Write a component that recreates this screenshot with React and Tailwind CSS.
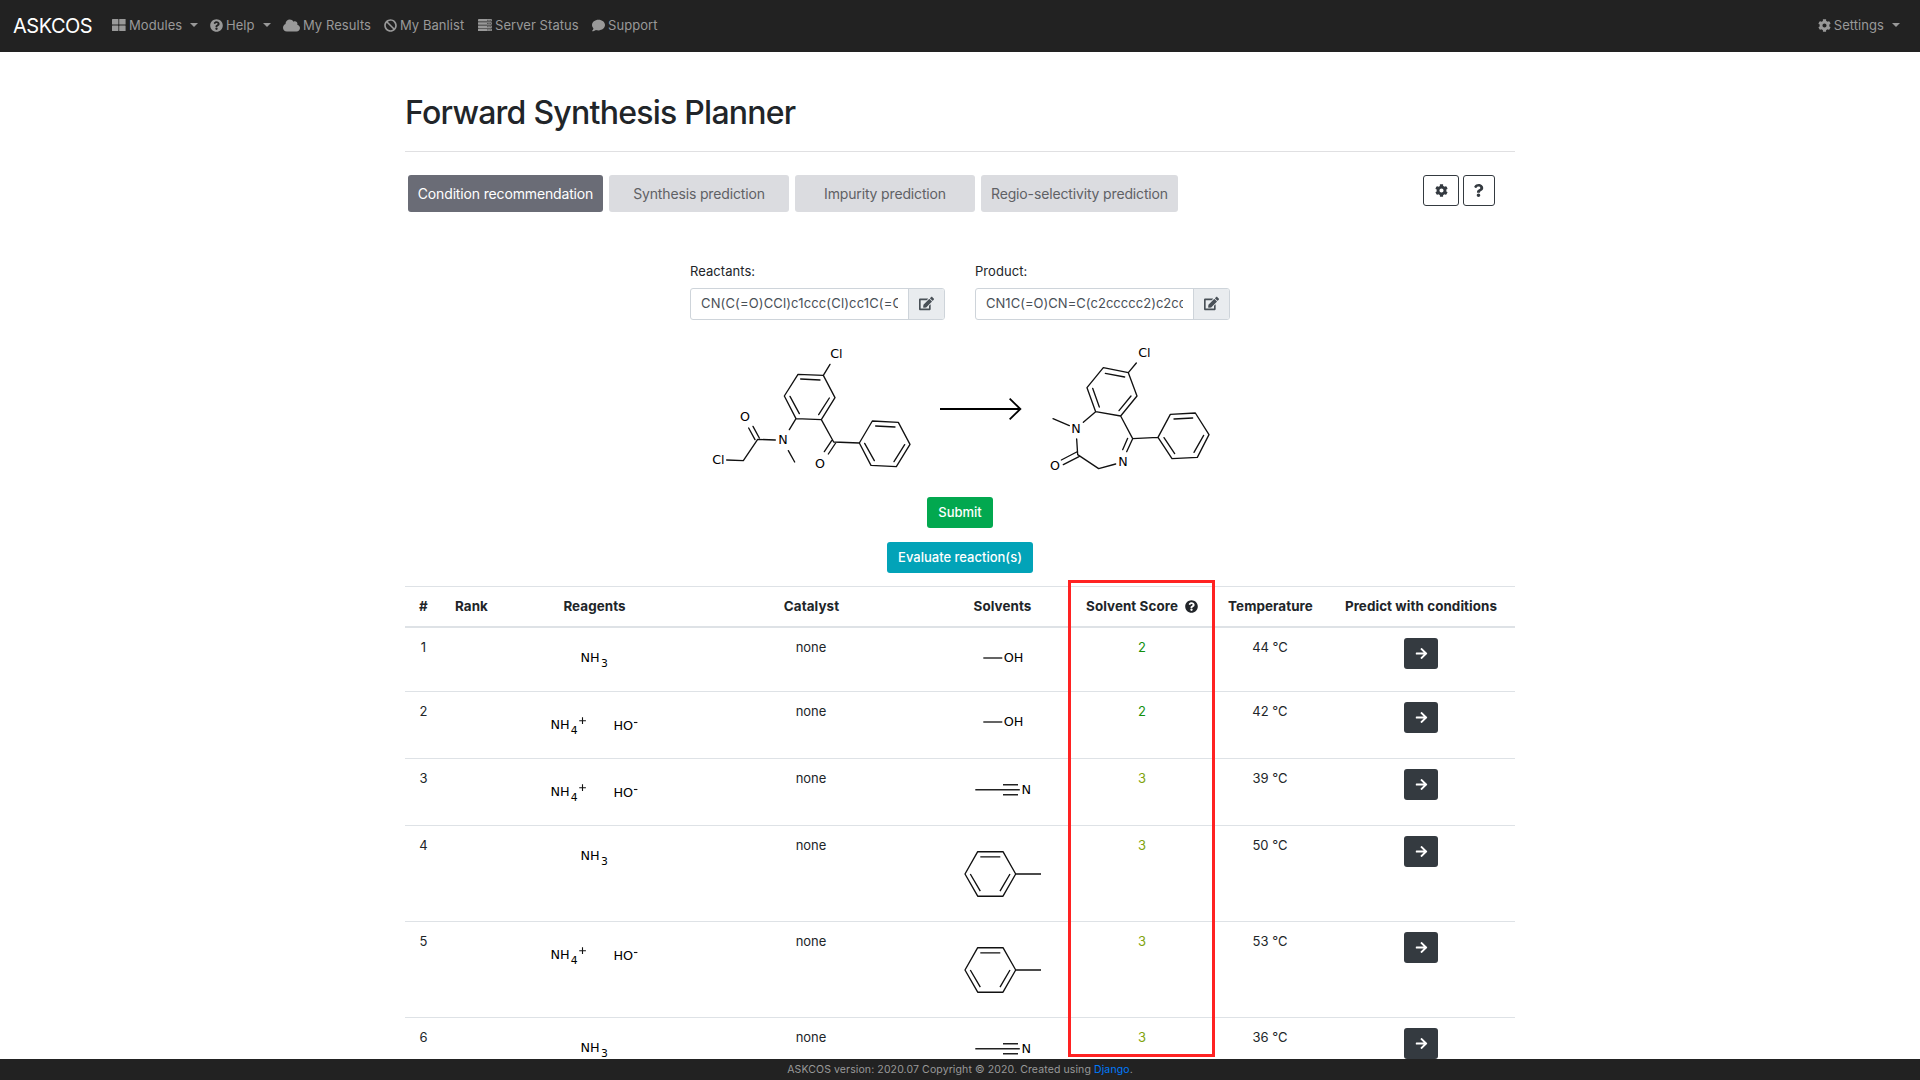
import React from "react";
import { FaQuestionCircle, FaCloud, FaBan, FaComment, FaCog, FaQuestion, FaEdit, FaArrowRight } from "react-icons/fa";

const MOL_FONT = '"DejaVu Sans", sans-serif';

function ModulesIcon() {
  return (
    <svg width="14" height="12" viewBox="0 0 14 12" fill="currentColor">
      <rect x="0" y="0" width="6.4" height="5.6" rx="0.5" />
      <rect x="7.2" y="0" width="6.4" height="5.6" rx="0.5" />
      <rect x="0" y="6.4" width="6.4" height="5.6" rx="0.5" />
      <rect x="7.2" y="6.4" width="6.4" height="5.6" rx="0.5" />
    </svg>
  );
}

function ServerIcon() {
  return (
    <svg width="14" height="12" viewBox="0 0 14 12">
      {[0, 3.2, 6.4, 9.6].map((y) => (
        <g key={y}>
          <rect x="0" y={y} width="13.8" height="2.5" rx="0.4" fill="currentColor" />
          <rect x="9.4" y={y + 0.8} width="1" height="1" fill="#222222" />
          <rect x="11.6" y={y + 0.8} width="1" height="1" fill="#222222" />
        </g>
      ))}
    </svg>
  );
}

function Caret() {
  return <span className="ml-[8px] h-0 w-0 border-x-4 border-t-4 border-x-transparent border-t-current" />;
}

function NavItem({ icon, label, caret, width }) {
  return (
    <a className={"flex items-center whitespace-nowrap " + width}>
      <span className="mr-[3px] flex shrink-0 items-center">{icon}</span>
      <span className="pt-[2px]">{label}</span>
      {caret && <Caret />}
    </a>
  );
}

function Lines({ d }) {
  return <path d={d} fill="none" stroke="#111" strokeWidth="4" strokeLinecap="round" strokeLinejoin="round" />;
}

function Atom({ x, y, children }) {
  return (
    <text x={x} y={y} fontSize="38" textAnchor="middle" fill="#000" fontFamily={MOL_FONT}>
      {children}
    </text>
  );
}

function ReactionDrawing() {
  return (
    <svg className="block" width="520" height="130" viewBox="700 342 520 130">
      <g transform="translate(680 250) scale(0.33333)">
        <Lines d="M354 373 L430 376 L465 443 L424 509 L348 506 L313 438 Z M362 387 L420 390 M448 444 L416 494 M358 491 L330 439 M430 376 L450 343 M348 506 L328 539 M286 570 L233 568 L190 632 L140 630 M238 564 L219 529 M225 569 L206 534 M325 602 L344 636 M424 509 L461 576 L538 579 M455 572 L433 605 M467 579 L445 612 M538 579 L577 513 L655 517 L690 583 L649 650 L573 646 Z M587 528 L645 531 M674 584 L642 635 M583 632 L554 580" />
        <Atom x={469} y={325}>Cl</Atom>
        <Atom x={195} y={513}>O</Atom>
        <Atom x={309} y={583}>N</Atom>
        <Atom x={115} y={643}>Cl</Atom>
        <Atom x={420} y={654}>O</Atom>
      </g>
      <g transform="translate(920 250) scale(0.33333)">
        <path d="M60 477 H300 M269 446 L301 477 L269 508" fill="none" stroke="#000" strokeWidth="5.5" />
        <Lines d="M550 353 L625 368 L651 438 L602 498 L527 485 L501 413 Z M556 370 L614 381 M633 438 L597 482 M538 471 L518 415 M625 368 L649 339 M527 485 L490 517 M448 527 L399 506 M470 567 L473 614 L536 656 L587 642 M470 606 L424 630 M477 620 L430 644 M602 498 L638 566 L714 562 M638 566 L620 605 M623 565 L608 599 M714 562 L751 493 L826 489 L867 554 L832 622 L756 626 Z M762 507 L818 504 M851 556 L822 607 M764 611 L732 563" />
        <Atom x={673} y={321}>Cl</Atom>
        <Atom x={468} y={549}>N</Atom>
        <Atom x={405} y={660}>O</Atom>
        <Atom x={609} y={647}>N</Atom>
      </g>
    </svg>
  );
}

function Reagents({ kind }) {
  return (
    <svg className="block" width="186" height="54" fontFamily={MOL_FONT} fill="#000" fontSize="12.8">
      {kind === "ammonia" ? (
        <>
          <text x="79.5" y="34.3">NH</text>
          <text x="100" y="38.7" fontSize="10.8">3</text>
        </>
      ) : (
        <>
          <text x="49.5" y="37">NH</text>
          <text x="69.8" y="41.7" fontSize="10.8">4</text>
          <path d="M78.2 28.7 H84.9 M81.5 25.3 V32" stroke="#111" strokeWidth="1.1" fill="none" />
          <text x="112.5" y="38">HO</text>
          <path d="M132.9 30.5 H136.4" stroke="#111" strokeWidth="1.1" fill="none" />
        </>
      )}
    </svg>
  );
}

function Solvent({ kind }) {
  if (kind === "methanol") {
    return (
      <svg className="block" width="134" height="54">
        <path d="M48.3 30 H67.3" stroke="#222" strokeWidth="1.4" />
        <text x="68.8" y="34.3" fontSize="12.8" fill="#000" fontFamily={MOL_FONT}>OH</text>
      </svg>
    );
  }
  if (kind === "acetonitrile") {
    return (
      <svg className="block" width="134" height="54">
        <path d="M40.3 30.8 H84.8 M68 25.8 H83 M68 35.8 H83" stroke="#222" strokeWidth="1.4" />
        <text x="86.6" y="35" fontSize="12.8" fill="#000" fontFamily={MOL_FONT}>N</text>
      </svg>
    );
  }
  return (
    <svg className="block" width="134" height="86">
      <path
        d="M30 48 L42.7 25.7 H68 L80.7 48 L68 70.2 H42.7 Z M80.7 48 H106 M45.3 30.8 H65.3 M35.3 48 L45.3 65.2 M75 48 L65 65.2"
        fill="none"
        stroke="#111"
        strokeWidth="1.35"
        strokeLinejoin="round"
      />
    </svg>
  );
}

const GRID = "grid grid-cols-[36px_60px_186px_248px_134px_146px_111px_189px]";

const rows = [
  { n: 1, reagents: "ammonia", solvent: "methanol", score: 2, temp: 44, height: "h-[64px]" },
  { n: 2, reagents: "ammonium", solvent: "methanol", score: 2, temp: 42, height: "h-[67px]" },
  { n: 3, reagents: "ammonium", solvent: "acetonitrile", score: 3, temp: 39, height: "h-[67px]" },
  { n: 4, reagents: "ammonia", solvent: "toluene", score: 3, temp: 50, height: "h-[96px]" },
  { n: 5, reagents: "ammonium", solvent: "toluene", score: 3, temp: 53, height: "h-[96px]" },
  { n: 6, reagents: "ammonia", solvent: "acetonitrile", score: 3, temp: 36, height: "h-[62px]" },
];

function SmilesField({ label, value, tracking }) {
  return (
    <div className="w-[255px]">
      <label className="block h-[27px] leading-[21px] tracking-[0.05px]">{label}</label>
      <div className="flex h-8 overflow-hidden rounded-[3px] border border-[#ced4da]">
        <div className={"flex flex-1 items-center overflow-hidden px-[10px] text-[#495057] " + tracking}>
          <span className="w-full overflow-hidden whitespace-nowrap">{value}</span>
        </div>
        <div className="flex w-[36px] items-center justify-center border-l border-[#ced4da] bg-[#e9ecef] pb-[2px] text-[#495057]">
          <FaEdit size={15} />
        </div>
      </div>
    </div>
  );
}

function Tab({ active, width, children }) {
  return (
    <div
      className={
        "flex h-[37px] items-center justify-center rounded-[3px] text-[14px] tracking-[-0.15px] whitespace-nowrap " +
        (active ? "bg-[#6a6c76] text-white " : "bg-[#dbdce0] text-[#5f6165] ") +
        width
      }
    >
      {children}
    </div>
  );
}

export default function App() {
  return (
    <div className="relative h-[1080px] w-[1920px] overflow-hidden bg-white font-['Inter','Liberation_Sans',sans-serif] text-[13px] text-[#212529]">
      <nav className="flex h-[52px] items-center bg-[#222222] pb-[2px] pl-[13px] tracking-[0.06px] text-[#999999]">
        <span className="w-[99px] pt-[2px] text-[20px] tracking-[-0.5px] text-white">ASKCOS</span>
        <NavItem width="w-[98px]" icon={<ModulesIcon />} label="Modules" caret />
        <NavItem width="w-[73px]" icon={<FaQuestionCircle size={13} />} label="Help" caret />
        <NavItem width="w-[101px]" icon={<FaCloud size={17} />} label="My Results" />
        <NavItem width="w-[94px]" icon={<FaBan size={13} />} label="My Banlist" />
        <NavItem width="w-[114px]" icon={<ServerIcon />} label="Server Status" />
        <NavItem width="w-[90px]" icon={<FaComment size={13} />} label="Support" />
        <div className="ml-auto mr-[20px]">
          <NavItem width="w-auto" icon={<FaCog size={13} />} label="Settings" caret />
        </div>
      </nav>

      <main className="mx-auto w-[1110px]">
        <div className="h-[100px] border-b border-[#e0e0e2] pt-[41px]">
          <h1 className="text-[32px] leading-[40px] font-medium tracking-[-0.75px]">Forward Synthesis Planner</h1>
        </div>

        <div className="mt-[23px] flex items-start pr-[20px] pl-[3px]">
          <div className="flex gap-[6px]">
            <Tab active width="w-[195px]">Condition recommendation</Tab>
            <Tab width="w-[180px]">Synthesis prediction</Tab>
            <Tab width="w-[180px]">Impurity prediction</Tab>
            <Tab width="w-[197px]">Regio-selectivity prediction</Tab>
          </div>
          <div className="ml-auto flex gap-1 text-[#343a40]">
            <button className="flex h-[31px] w-[36px] items-center justify-center rounded-[3px] border border-[#343a40]">
              <FaCog size={13} />
            </button>
            <button className="flex h-[31px] w-[32px] items-center justify-center rounded-[3px] border border-[#343a40] pr-[1px] pb-[1px]">
              <FaQuestion size={13} />
            </button>
          </div>
        </div>

        <div className="mt-[49px] flex justify-center gap-[30px]">
          <SmilesField label="Reactants:" value="CN(C(=O)CCl)c1ccc(Cl)cc1C(=O)c1ccccc1" tracking="tracking-[0.14px]" />
          <SmilesField label="Product:" value="CN1C(=O)CN=C(c2ccccc2)c2cc(Cl)ccc21" tracking="tracking-[0.03px]" />
        </div>

        <div className="mt-[22px] flex justify-center">
          <ReactionDrawing />
        </div>

        <div className="mt-[25px] flex flex-col items-center gap-[14px] font-medium text-white">
          <button className="h-[31px] w-[66px] rounded-[3px] bg-[#02a84f]">Submit</button>
          <button className="h-[31px] w-[146px] rounded-[3px] bg-[#02a3b8]">Evaluate reaction(s)</button>
        </div>

        <div className="mt-[13px] text-center">
          <div className={GRID + " h-[42px] items-center border-t border-b-2 border-[#dee2e6] text-[13.4px] font-bold tracking-[0.08px] whitespace-nowrap"}>
            <div className="pl-px">#</div>
            <div className="pl-px">Rank</div>
            <div className="pl-px">Reagents</div>
            <div className="pl-px">Catalyst</div>
            <div className="pl-px">Solvents</div>
            <div className="flex items-center justify-center gap-[7px]">
              Solvent Score <FaQuestionCircle size={13} />
            </div>
            <div>Temperature</div>
            <div className="pl-px">Predict with conditions</div>
          </div>
          {rows.map((r) => (
            <div key={r.n} className={GRID + " border-b border-[#dee2e6] leading-[21px] " + r.height}>
              <div className="pt-[9px] pl-px">{r.n}</div>
              <div />
              <Reagents kind={r.reagents} />
              <div className="pt-[9px]">none</div>
              <Solvent kind={r.solvent} />
              <div className={"pt-[9px] " + (r.score === 2 ? "text-[#12900c]" : "text-[#80a40c]")}>{r.score}</div>
              <div className="pt-[9px] pr-px">{r.temp} °C</div>
              <div className="flex justify-center pt-[10px]">
                <button className="flex h-[31px] w-[34px] items-center justify-center rounded-[3px] bg-[#343a40] pb-[1px] pl-[1px] text-white">
                  <FaArrowRight size={13} />
                </button>
              </div>
            </div>
          ))}
        </div>
      </main>

      <div className="absolute top-[580px] left-[1068px] h-[477px] w-[147px] border-[3px] border-[#ff2222]" />

      <footer className="absolute bottom-0 left-0 flex h-[21px] w-full items-center justify-center bg-[#222222] text-[10.5px] tracking-[0.11px] whitespace-pre text-[#999999]">
        ASKCOS version: 2020.07 Copyright © 2020. Created using <a className="text-[#007bff]">Django</a>.
      </footer>
    </div>
  );
}
